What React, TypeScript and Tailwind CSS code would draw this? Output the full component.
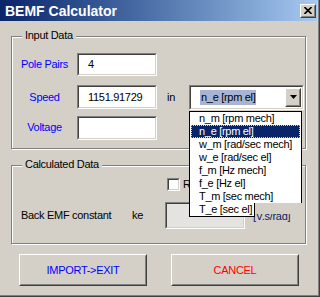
import React from "react";

const FONT = "font-['Liberation_Sans',Arial,sans-serif]";

function Sunken({ className = "", inner = "bg-white", children }: { className?: string; inner?: string; children?: React.ReactNode }) {
  return (
    <div className={`border border-t-[#808080] border-l-[#808080] border-b-white border-r-white ${className}`}>
      <div className={`h-full w-full border border-t-[#404040] border-l-[#404040] border-b-[#d4d0c8] border-r-[#d4d0c8] ${inner}`}>
        {children}
      </div>
    </div>
  );
}

function Raised({ className = "", children }: { className?: string; children?: React.ReactNode }) {
  return (
    <div className={`border border-t-white border-l-white border-b-[#404040] border-r-[#404040] bg-[#d4d0c8] ${className}`}>
      <div className="h-full w-full border border-t-[#d4d0c8] border-l-[#d4d0c8] border-b-[#808080] border-r-[#808080] flex items-center justify-center">
        {children}
      </div>
    </div>
  );
}

const items = [
  "n_m [rpm mech]",
  "n_e [rpm el]",
  "w_m [rad/sec mech]",
  "w_e [rad/sec el]",
  "f_m [Hz mech]",
  "f_e [Hz el]",
  "T_m [sec mech]",
];

export default function App() {
  return (
    <div className={`${FONT} relative w-[320px] h-[297px] bg-[#d4d0c8] border-r border-b border-[#404040] shadow-[inset_-1px_-1px_0_#808080] text-[11px] leading-[13px] tracking-[-0.3px] text-black flex flex-col`}>
      {/* Title bar */}
      <div className="h-[21px] w-[317px] bg-linear-to-r from-[#0a246a] to-[#a6caf0] flex items-center pl-[5px] pr-[1px]">
        <span className="text-white font-bold text-[14px] leading-[16px] tracking-normal">BEMF Calculator</span>
        <Raised className="ml-auto w-[16px] h-[14px]">
          <svg width="8" height="7" viewBox="0 0 8 7">
            <path d="M0.5 0 L7.5 7 M7.5 0 L0.5 7" stroke="#000" strokeWidth="1.6" />
          </svg>
        </Raised>
      </div>

      {/* Input Data frame */}
      <div className="relative ml-[11px] mt-[15px] w-[295px] h-[113px] border border-[#808080] shadow-[inset_1px_1px_0_#fff,1px_1px_0_#fff] pt-[16px]">
        <span className="absolute left-[10px] top-[-8px] px-[3px] bg-[#d4d0c8]">Input Data</span>
        <div className="flex items-center h-[23px]">
          <span className="w-[65px] text-center text-[#0000ff]">Pole Pairs</span>
          <Sunken className="w-[80px] h-[23px]">
            <div className="pl-[9px] leading-[19px]">4</div>
          </Sunken>
        </div>
        <div className="flex items-center h-[24px] mt-[9px]">
          <span className="w-[65px] text-center text-[#0000ff]">Speed</span>
          <Sunken className="w-[80px] h-[24px]">
            <div className="pl-[9px] leading-[20px]">1151.91729</div>
          </Sunken>
          <span className="ml-[10px] w-[22px]">in</span>
          <Sunken className="w-[115px] h-[25px]">
            <div className="flex h-full items-center pl-[9px] pr-[1px]">
              <span className="bg-[#a7b4d4] px-[1px] leading-[15px] whitespace-nowrap">n_e [rpm el]</span>
              <Raised className="ml-auto w-[16px] h-[19px]">
                <svg width="7" height="4" viewBox="0 0 7 4">
                  <path d="M0 0 H7 L3.5 4 Z" fill="#000" />
                </svg>
              </Raised>
            </div>
          </Sunken>
        </div>
        <div className="flex items-center h-[23px] mt-[7px]">
          <span className="w-[65px] text-center text-[#0000ff]">Voltage</span>
          <Sunken className="w-[80px] h-[24px]" />
        </div>
      </div>

      {/* Calculated Data frame */}
      <div className="relative ml-[11px] mt-[16px] w-[295px] h-[79px] border border-[#808080] shadow-[inset_1px_1px_0_#fff,1px_1px_0_#fff] pt-[12px]">
        <span className="absolute left-[10px] top-[-8px] px-[3px] bg-[#d4d0c8]">Calculated Data</span>
        <div className="flex items-center ml-[155px] h-[13px]">
          <Sunken className="w-[13px] h-[13px]" />
          <span className="ml-[3px]">R</span>
        </div>
        <div className="flex items-center mt-[11px] pl-[9px]">
          <span className="w-[111px] whitespace-nowrap">Back EMF constant</span>
          <span className="w-[33px]">ke</span>
          <Sunken className="w-[80px] h-[27px]" inner="bg-[#e4e3df]" />
          <span className="ml-[8px] text-[#102060] mt-[1px] whitespace-nowrap">[V.s/rad]</span>
        </div>
      </div>

      {/* Buttons */}
      <div className="flex mt-[10px] ml-[19px] gap-[24px]">
        <Raised className="w-[128px] h-[32px]">
          <span className="text-[#0000ff]">IMPORT-&gt;EXIT</span>
        </Raised>
        <Raised className="w-[128px] h-[32px]">
          <span className="text-[#ff0000]">CANCEL</span>
        </Raised>
      </div>

      {/* Dropdown list overlay */}
      <div className="absolute left-[189px] top-[111px] w-[113px]">
        <div className="bg-white border-l border-r border-t border-black pl-[1px] pr-[1px]">
          {items.map((it) =>
            it === "n_e [rpm el]" ? (
              <div key={it} className="h-[13px] bg-[#0a246a] text-white border border-dotted border-[#e0d090] pl-[7px] leading-[11px] whitespace-nowrap">
                {it}
              </div>
            ) : (
              <div key={it} className="h-[13px] pl-[8px] leading-[13px] whitespace-nowrap">
                {it}
              </div>
            )
          )}
        </div>
        <div className="flex">
          <div className="w-[66px] h-[14px] bg-white border-l border-r border-b border-black pl-[9px] leading-[13px] whitespace-nowrap overflow-hidden">
            T_e [sec el]
          </div>
          <div className="w-[47px] h-[11px] bg-[#d4d0c8]" />
        </div>
      </div>
    </div>
  );
}
